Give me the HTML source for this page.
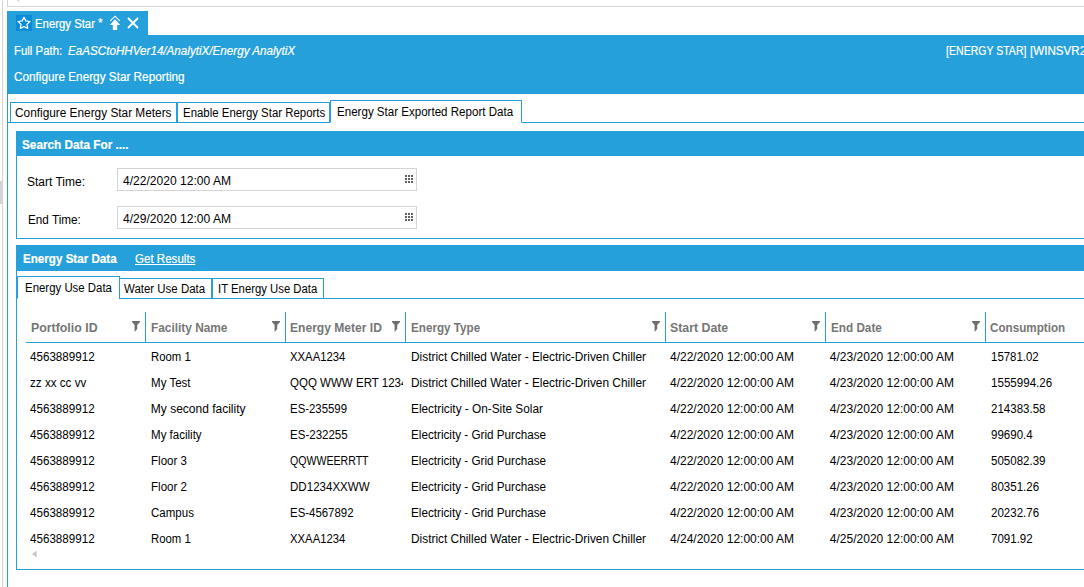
<!DOCTYPE html>
<html><head><meta charset="utf-8">
<style>
html,body{margin:0;padding:0;}
body{width:1084px;height:587px;overflow:hidden;position:relative;background:#fff;font-family:"Liberation Sans",sans-serif;font-size:12px;color:#000;}
.a{position:absolute;}
.t{position:absolute;white-space:pre;line-height:14px;}
.w{color:#fff;-webkit-text-stroke:0.2px #fff;}
.bd{font-weight:bold;}
.hd{font-weight:bold;color:#767676;}
.tab{position:absolute;border:1px solid #25a0da;box-sizing:border-box;background:#fff;}
.inp{position:absolute;border:1px solid #d6d4d4;box-sizing:border-box;background:#fff;}
.sep{position:absolute;width:1px;background:#25a0da;top:312px;height:30px;}
svg{position:absolute;overflow:visible;}
</style></head><body>
<div class="a" style="left:2px;top:0px;width:1px;height:587px;background:#d6d4d4"></div>
<div class="a" style="left:0px;top:181px;width:3px;height:23px;background:#d6d4d4"></div>
<div class="a" style="left:7px;top:-2px;width:1100px;height:9px;border-left:1px solid #d6d4d4;border-bottom:1px solid #d6d4d4;box-sizing:border-box"></div>
<svg style="left:0;top:0" width="30" height="10"><polygon points="16,-1 19,2 19,-3" fill="#c8c8c8"/></svg>
<div class="a" style="left:7px;top:11px;width:141px;height:24px;background:#25a0da"></div>
<div class="a" style="left:16px;top:15px;width:16px;height:16px;background:#0a8bd9"></div>
<svg style="left:0;top:0" width="40" height="40"><polygon points="24.00,17.20 25.82,20.89 29.90,21.48 26.95,24.36 27.64,28.42 24.00,26.50 20.36,28.42 21.05,24.36 18.10,21.48 22.18,20.89" fill="none" stroke="#fff" stroke-width="1.2" stroke-linejoin="round"/></svg>
<div class="a" style="left:7px;top:35px;width:1077px;height:59px;background:#25a0da"></div>
<div class="a" style="left:7px;top:93px;width:1077px;height:1px;background:#1e98d6"></div>
<div class="a" style="left:7px;top:94px;width:1px;height:493px;background:#25a0da"></div>
<span class="t w" style="left:35.00px;top:17px;transform:scaleX(0.9452);transform-origin:1px 0">Energy Star</span>
<span class="t w" style="left:98.00px;top:16px">*</span>
<svg style="left:0;top:0" width="150" height="40"><polyline points="110.3,20.8 115,16.2 119.7,20.8" fill="none" stroke="#fff" stroke-width="1.1"/><polygon points="115,19.2 120.2,25 117.2,25 117.2,30 112.8,30 112.8,25 109.8,25" fill="#fff"/><path d="M128.5,18.5 L137.5,27.5 M137.5,18.5 L128.5,27.5" stroke="#fff" stroke-width="1.8" stroke-linecap="round"/></svg>
<span class="t w" style="left:13.80px;top:44px;transform:scaleX(0.9490);transform-origin:1px 0">Full Path:</span>
<span class="t w" style="left:68.10px;top:44px;transform:scaleX(0.9705);transform-origin:0px 0;font-style:italic">EaASCtoHHVer14/AnalytiX/Energy AnalytiX</span>
<span class="t w" style="left:946.00px;top:44px;transform:scaleX(0.8767);transform-origin:1px 0">[ENERGY STAR]</span>
<span class="t w" style="left:1029.60px;top:44px;transform:scaleX(0.9680);transform-origin:1px 0">[WINSVR2019]</span>
<span class="t w" style="left:14.00px;top:70px;transform:scaleX(0.9798);transform-origin:1px 0">Configure Energy Star Reporting</span>
<div class="a" style="left:7px;top:122px;width:1077px;height:1px;background:#25a0da"></div>
<div class="tab" style="left:10px;top:102px;width:167px;height:21px"></div>
<div class="tab" style="left:177px;top:102px;width:153px;height:21px"></div>
<div class="tab" style="left:330px;top:100px;width:192px;height:23px;border-bottom-color:#fff"></div>
<span class="t " style="left:15.40px;top:106px;transform:scaleX(0.9860);transform-origin:1px 0">Configure Energy Star Meters</span>
<span class="t " style="left:183.00px;top:106px;transform:scaleX(0.9514);transform-origin:1px 0">Enable Energy Star Reports</span>
<span class="t " style="left:337.00px;top:105px;transform:scaleX(0.9632);transform-origin:1px 0">Energy Star Exported Report Data</span>
<div class="a" style="left:16px;top:131px;width:1068px;height:25px;background:#25a0da"></div>
<div class="a" style="left:16px;top:156px;width:1px;height:83px;background:#25a0da"></div>
<div class="a" style="left:16px;top:238px;width:1068px;height:1px;background:#25a0da"></div>
<span class="t w bd" style="left:22.20px;top:138px;transform:scaleX(0.9804);transform-origin:1px 0">Search Data For ....</span>
<span class="t " style="left:27.00px;top:175px;transform:scaleX(1.0000);transform-origin:1px 0">Start Time:</span>
<span class="t " style="left:27.80px;top:213px;transform:scaleX(0.9769);transform-origin:1px 0">End Time:</span>
<div class="inp" style="left:117px;top:168px;width:300px;height:23px"></div>
<div class="inp" style="left:117px;top:206px;width:300px;height:23px"></div>
<span class="t " style="left:122.75px;top:174px;transform:scaleX(1.0061);transform-origin:0px 0">4/22/2020 12:00 AM</span>
<span class="t " style="left:122.75px;top:212px;transform:scaleX(1.0061);transform-origin:0px 0">4/29/2020 12:00 AM</span>
<svg style="left:0;top:0" width="420" height="230"><rect x="405" y="175" width="2" height="2" fill="#5e5e5e"/><rect x="405" y="178" width="2" height="2" fill="#5e5e5e"/><rect x="405" y="181" width="2" height="2" fill="#5e5e5e"/><rect x="408" y="175" width="2" height="2" fill="#5e5e5e"/><rect x="408" y="178" width="2" height="2" fill="#5e5e5e"/><rect x="408" y="181" width="2" height="2" fill="#5e5e5e"/><rect x="411" y="175" width="2" height="2" fill="#5e5e5e"/><rect x="411" y="178" width="2" height="2" fill="#5e5e5e"/><rect x="411" y="181" width="2" height="2" fill="#5e5e5e"/></svg>
<svg style="left:0;top:0" width="420" height="230"><rect x="405" y="213" width="2" height="2" fill="#5e5e5e"/><rect x="405" y="216" width="2" height="2" fill="#5e5e5e"/><rect x="405" y="219" width="2" height="2" fill="#5e5e5e"/><rect x="408" y="213" width="2" height="2" fill="#5e5e5e"/><rect x="408" y="216" width="2" height="2" fill="#5e5e5e"/><rect x="408" y="219" width="2" height="2" fill="#5e5e5e"/><rect x="411" y="213" width="2" height="2" fill="#5e5e5e"/><rect x="411" y="216" width="2" height="2" fill="#5e5e5e"/><rect x="411" y="219" width="2" height="2" fill="#5e5e5e"/></svg>
<div class="a" style="left:16px;top:245px;width:1068px;height:26px;background:#25a0da"></div>
<div class="a" style="left:16px;top:271px;width:1px;height:299px;background:#25a0da"></div>
<div class="a" style="left:16px;top:569px;width:1068px;height:1px;background:#25a0da"></div>
<span class="t w bd" style="left:22.90px;top:252px;transform:scaleX(0.9677);transform-origin:1px 0">Energy Star Data</span>
<span class="t w" style="left:135.00px;top:252px;transform:scaleX(0.9623);transform-origin:1px 0;text-decoration:underline">Get Results</span>
<div class="a" style="left:16px;top:298px;width:1068px;height:1px;background:#25a0da"></div>
<div class="tab" style="left:17px;top:276px;width:103px;height:23px;border-bottom-color:#fff"></div>
<div class="tab" style="left:119px;top:278px;width:93px;height:21px"></div>
<div class="tab" style="left:211px;top:278px;width:113px;height:21px;border-left-width:2px"></div>
<span class="t " style="left:24.70px;top:281px;transform:scaleX(0.9511);transform-origin:1px 0">Energy Use Data</span>
<span class="t " style="left:124.20px;top:282px;transform:scaleX(0.9553);transform-origin:0px 0">Water Use Data</span>
<span class="t " style="left:217.90px;top:282px;transform:scaleX(0.9433);transform-origin:1px 0">IT Energy Use Data</span>
<div class="a" style="left:26px;top:342px;width:1058px;height:1px;background:#25a0da"></div>
<div class="sep" style="left:145px"></div>
<svg style="left:132px;top:321px" width="8" height="11"><polygon points="0,0 8,0 8,1 5.2,4 5.2,8 2.6,11 2.6,4 0,1" fill="#6e6e6e"/></svg>
<div class="sep" style="left:285px"></div>
<svg style="left:272px;top:321px" width="8" height="11"><polygon points="0,0 8,0 8,1 5.2,4 5.2,8 2.6,11 2.6,4 0,1" fill="#6e6e6e"/></svg>
<div class="sep" style="left:405px"></div>
<svg style="left:392px;top:321px" width="8" height="11"><polygon points="0,0 8,0 8,1 5.2,4 5.2,8 2.6,11 2.6,4 0,1" fill="#6e6e6e"/></svg>
<div class="sep" style="left:665px"></div>
<svg style="left:652px;top:321px" width="8" height="11"><polygon points="0,0 8,0 8,1 5.2,4 5.2,8 2.6,11 2.6,4 0,1" fill="#6e6e6e"/></svg>
<div class="sep" style="left:825px"></div>
<svg style="left:812px;top:321px" width="8" height="11"><polygon points="0,0 8,0 8,1 5.2,4 5.2,8 2.6,11 2.6,4 0,1" fill="#6e6e6e"/></svg>
<div class="sep" style="left:985px"></div>
<svg style="left:972px;top:321px" width="8" height="11"><polygon points="0,0 8,0 8,1 5.2,4 5.2,8 2.6,11 2.6,4 0,1" fill="#6e6e6e"/></svg>
<span class="t hd" style="left:30.90px;top:321px;transform:scaleX(1.0302);transform-origin:1px 0">Portfolio ID</span>
<span class="t hd" style="left:150.60px;top:321px;transform:scaleX(0.9882);transform-origin:1px 0">Facility Name</span>
<span class="t hd" style="left:290.30px;top:321px;transform:scaleX(1.0056);transform-origin:1px 0">Energy Meter ID</span>
<span class="t hd" style="left:410.60px;top:321px;transform:scaleX(0.9729);transform-origin:1px 0">Energy Type</span>
<span class="t hd" style="left:670.00px;top:321px;transform:scaleX(1.0273);transform-origin:1px 0">Start Date</span>
<span class="t hd" style="left:830.60px;top:321px;transform:scaleX(0.9765);transform-origin:1px 0">End Date</span>
<span class="t hd" style="left:990.40px;top:321px;transform:scaleX(0.9714);transform-origin:1px 0">Consumption</span>
<span class="t" style="left:30.00px;top:350px;transform:scaleX(0.968);transform-origin:1px 0">4563889912</span>
<span class="t" style="left:150.80px;top:350px;transform:scaleX(0.944);transform-origin:1px 0">Room 1</span>
<div class="a" style="left:290.40px;top:350px;width:112.60px;height:16px;overflow:hidden"><span class="t" style="left:0;top:0;transform:scaleX(0.94);transform-origin:1px 0">XXAA1234</span></div>
<span class="t" style="left:410.90px;top:350px;transform:scaleX(0.989);transform-origin:1px 0">District Chilled Water - Electric-Driven Chiller</span>
<span class="t" style="left:670.00px;top:350px;transform:scaleX(1.0);transform-origin:1px 0">4/22/2020 12:00:00 AM</span>
<span class="t" style="left:829.85px;top:350px;transform:scaleX(1.0);transform-origin:1px 0">4/23/2020 12:00:00 AM</span>
<span class="t" style="left:990.50px;top:350px;transform:scaleX(0.95);transform-origin:1px 0">15781.02</span>
<span class="t" style="left:30.00px;top:376px;transform:scaleX(0.97);transform-origin:1px 0">zz xx cc vv</span>
<span class="t" style="left:150.80px;top:376px;transform:scaleX(0.96);transform-origin:1px 0">My Test</span>
<div class="a" style="left:290.40px;top:376px;width:112.60px;height:16px;overflow:hidden"><span class="t" style="left:0;top:0;transform:scaleX(0.96);transform-origin:1px 0">QQQ WWW ERT 1234</span></div>
<span class="t" style="left:410.90px;top:376px;transform:scaleX(0.989);transform-origin:1px 0">District Chilled Water - Electric-Driven Chiller</span>
<span class="t" style="left:670.00px;top:376px;transform:scaleX(1.0);transform-origin:1px 0">4/22/2020 12:00:00 AM</span>
<span class="t" style="left:829.85px;top:376px;transform:scaleX(1.0);transform-origin:1px 0">4/23/2020 12:00:00 AM</span>
<span class="t" style="left:990.50px;top:376px;transform:scaleX(0.965);transform-origin:1px 0">1555994.26</span>
<span class="t" style="left:30.00px;top:402px;transform:scaleX(0.968);transform-origin:1px 0">4563889912</span>
<span class="t" style="left:150.80px;top:402px;transform:scaleX(1.0);transform-origin:1px 0">My second facility</span>
<div class="a" style="left:290.40px;top:402px;width:112.60px;height:16px;overflow:hidden"><span class="t" style="left:0;top:0;transform:scaleX(0.949);transform-origin:1px 0">ES-235599</span></div>
<span class="t" style="left:410.90px;top:402px;transform:scaleX(0.984);transform-origin:1px 0">Electricity - On-Site Solar</span>
<span class="t" style="left:670.00px;top:402px;transform:scaleX(1.0);transform-origin:1px 0">4/22/2020 12:00:00 AM</span>
<span class="t" style="left:829.85px;top:402px;transform:scaleX(1.0);transform-origin:1px 0">4/23/2020 12:00:00 AM</span>
<span class="t" style="left:990.50px;top:402px;transform:scaleX(0.96);transform-origin:1px 0">214383.58</span>
<span class="t" style="left:30.00px;top:428px;transform:scaleX(0.968);transform-origin:1px 0">4563889912</span>
<span class="t" style="left:150.80px;top:428px;transform:scaleX(0.96);transform-origin:1px 0">My facility</span>
<div class="a" style="left:290.40px;top:428px;width:112.60px;height:16px;overflow:hidden"><span class="t" style="left:0;top:0;transform:scaleX(0.96);transform-origin:1px 0">ES-232255</span></div>
<span class="t" style="left:410.90px;top:428px;transform:scaleX(0.974);transform-origin:1px 0">Electricity - Grid Purchase</span>
<span class="t" style="left:670.00px;top:428px;transform:scaleX(1.0);transform-origin:1px 0">4/22/2020 12:00:00 AM</span>
<span class="t" style="left:829.85px;top:428px;transform:scaleX(1.0);transform-origin:1px 0">4/23/2020 12:00:00 AM</span>
<span class="t" style="left:990.50px;top:428px;transform:scaleX(0.96);transform-origin:1px 0">99690.4</span>
<span class="t" style="left:30.00px;top:454px;transform:scaleX(0.968);transform-origin:1px 0">4563889912</span>
<span class="t" style="left:150.80px;top:454px;transform:scaleX(0.96);transform-origin:1px 0">Floor 3</span>
<div class="a" style="left:290.40px;top:454px;width:112.60px;height:16px;overflow:hidden"><span class="t" style="left:0;top:0;transform:scaleX(0.88);transform-origin:1px 0">QQWWEERRTT</span></div>
<span class="t" style="left:410.90px;top:454px;transform:scaleX(0.974);transform-origin:1px 0">Electricity - Grid Purchase</span>
<span class="t" style="left:670.00px;top:454px;transform:scaleX(1.0);transform-origin:1px 0">4/22/2020 12:00:00 AM</span>
<span class="t" style="left:829.85px;top:454px;transform:scaleX(1.0);transform-origin:1px 0">4/23/2020 12:00:00 AM</span>
<span class="t" style="left:990.50px;top:454px;transform:scaleX(0.96);transform-origin:1px 0">505082.39</span>
<span class="t" style="left:30.00px;top:480px;transform:scaleX(0.968);transform-origin:1px 0">4563889912</span>
<span class="t" style="left:150.80px;top:480px;transform:scaleX(0.96);transform-origin:1px 0">Floor 2</span>
<div class="a" style="left:290.40px;top:480px;width:112.60px;height:16px;overflow:hidden"><span class="t" style="left:0;top:0;transform:scaleX(0.962);transform-origin:1px 0">DD1234XXWW</span></div>
<span class="t" style="left:410.90px;top:480px;transform:scaleX(0.974);transform-origin:1px 0">Electricity - Grid Purchase</span>
<span class="t" style="left:670.00px;top:480px;transform:scaleX(1.0);transform-origin:1px 0">4/22/2020 12:00:00 AM</span>
<span class="t" style="left:829.85px;top:480px;transform:scaleX(1.0);transform-origin:1px 0">4/23/2020 12:00:00 AM</span>
<span class="t" style="left:990.50px;top:480px;transform:scaleX(0.96);transform-origin:1px 0">80351.26</span>
<span class="t" style="left:30.00px;top:506px;transform:scaleX(0.968);transform-origin:1px 0">4563889912</span>
<span class="t" style="left:150.80px;top:506px;transform:scaleX(0.96);transform-origin:1px 0">Campus</span>
<div class="a" style="left:290.40px;top:506px;width:112.60px;height:16px;overflow:hidden"><span class="t" style="left:0;top:0;transform:scaleX(0.951);transform-origin:1px 0">ES-4567892</span></div>
<span class="t" style="left:410.90px;top:506px;transform:scaleX(0.974);transform-origin:1px 0">Electricity - Grid Purchase</span>
<span class="t" style="left:670.00px;top:506px;transform:scaleX(1.0);transform-origin:1px 0">4/22/2020 12:00:00 AM</span>
<span class="t" style="left:829.85px;top:506px;transform:scaleX(1.0);transform-origin:1px 0">4/23/2020 12:00:00 AM</span>
<span class="t" style="left:990.50px;top:506px;transform:scaleX(0.96);transform-origin:1px 0">20232.76</span>
<span class="t" style="left:30.00px;top:532px;transform:scaleX(0.968);transform-origin:1px 0">4563889912</span>
<span class="t" style="left:150.80px;top:532px;transform:scaleX(0.944);transform-origin:1px 0">Room 1</span>
<div class="a" style="left:290.40px;top:532px;width:112.60px;height:16px;overflow:hidden"><span class="t" style="left:0;top:0;transform:scaleX(0.94);transform-origin:1px 0">XXAA1234</span></div>
<span class="t" style="left:410.90px;top:532px;transform:scaleX(0.989);transform-origin:1px 0">District Chilled Water - Electric-Driven Chiller</span>
<span class="t" style="left:670.00px;top:532px;transform:scaleX(1.0);transform-origin:1px 0">4/24/2020 12:00:00 AM</span>
<span class="t" style="left:829.85px;top:532px;transform:scaleX(1.0);transform-origin:1px 0">4/25/2020 12:00:00 AM</span>
<span class="t" style="left:990.50px;top:532px;transform:scaleX(0.96);transform-origin:1px 0">7091.92</span>
<svg style="left:0;top:0" width="60" height="587"><polygon points="32,554 36.6,550.8 36.6,557.2" fill="#c4c4c4"/></svg>
</body></html>
